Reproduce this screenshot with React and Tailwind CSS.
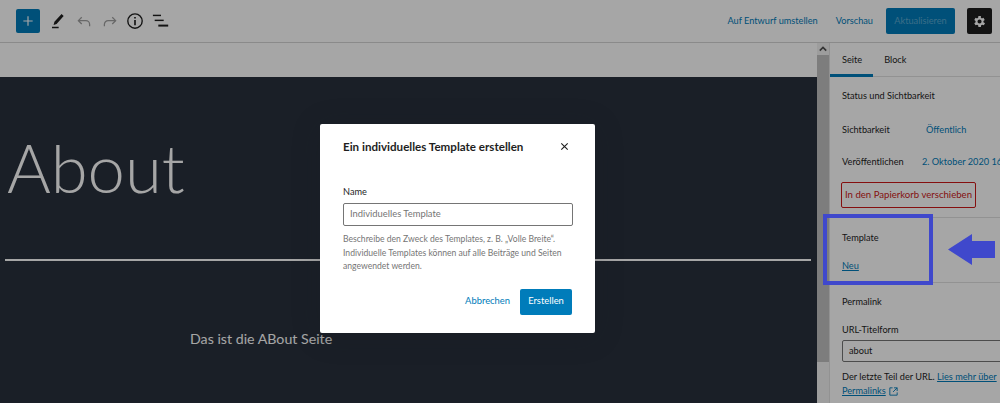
import React from "react";

const font = { fontFamily: '"Lato", "Open Sans", sans-serif' };

function Icon({ children, className = "" }) {
  return (
    <svg viewBox="0 0 24 24" className={className} fill="currentColor" aria-hidden="true">
      {children}
    </svg>
  );
}

function Header() {
  return (
    <header className="h-[43px] shrink-0 flex items-center bg-white border-b border-[#d4d4d4] pl-[16px] pr-[8px]">
      <div className="w-[24px] h-[24px] bg-[#007cba] rounded-[2px] flex items-center justify-center text-white">
        <Icon className="w-[14px] h-[14px]"><path d="M11 4h2v7h7v2h-7v7h-2v-7H4v-2h7z" /></Icon>
      </div>
      <div className="ml-[7px] w-[20px] h-[24px] flex items-center justify-center text-[#1e1e1e]">
        <Icon className="w-[20px] h-[20px]"><path d="M17.5 3.5 20 6l-8.5 9.500-3.600 1.200 1-3.700zM6 19h8v1.600H6z" /></Icon>
      </div>
      <div className="ml-[7px] w-[20px] flex items-center justify-center text-[#a0a0a0]">
        <svg viewBox="0 0 24 24" className="w-[18px] h-[18px]" fill="none" stroke="currentColor" strokeWidth="1.7"><path d="M9 7 4.500 11.500 9 16M5 11.500h9.500a5 5 0 0 1 5 5V19" /></svg>
      </div>
      <div className="ml-[6px] w-[20px] flex items-center justify-center text-[#a0a0a0]">
        <svg viewBox="0 0 24 24" className="w-[18px] h-[18px]" fill="none" stroke="currentColor" strokeWidth="1.7"><path d="M15 7l4.500 4.500L15 16M19 11.500H9.500a5 5 0 0 0-5 5V19" /></svg>
      </div>
      <div className="ml-[5px] w-[20px] flex items-center justify-center text-[#1e1e1e]">
        <svg viewBox="0 0 24 24" className="w-[18px] h-[18px]" fill="none" stroke="currentColor" strokeWidth="1.8"><circle cx="12" cy="12" r="9.600" /><path d="M12 10.500v7M12 6.500v2.200" strokeWidth="2.200" /></svg>
      </div>
      <div className="ml-[6px] w-[20px] flex items-center justify-center text-[#1e1e1e]">
        <svg viewBox="0 0 20 20" className="w-[18px] h-[18px]" fill="currentColor"><rect x="1" y="3" width="9" height="1.600" /><rect x="3" y="8.500" width="10" height="1.600" /><rect x="7" y="14" width="11" height="2.200" /></svg>
      </div>
      <div className="ml-auto flex items-center text-[9.2px] text-[#007cba]">
        <span>Auf Entwurf umstellen</span>
        <span className="ml-[18px]">Vorschau</span>
        <div className="ml-[13px] w-[69px] h-[26px] rounded-[2px] bg-[#007cba] text-[#5ea9d1] flex items-center justify-center">Aktualisieren</div>
        <div className="ml-[12px] w-[25px] h-[26px] rounded-[2px] bg-[#1e1e1e] text-white flex items-center justify-center">
          <Icon className="w-[15px] h-[15px]"><path d="M19.400 13a7.500 7.500 0 0 0 0-2l2.100-1.600-2-3.400-2.500 1a7.500 7.500 0 0 0-1.700-1L15.400 3.300h-4l-.4 2.700a7.500 7.500 0 0 0-1.700 1l-2.500-1-2 3.400L6.900 11a7.500 7.500 0 0 0 0 2l-2.100 1.600 2 3.400 2.500-1a7.500 7.500 0 0 0 1.700 1l.4 2.700h4l.4-2.700a7.500 7.500 0 0 0 1.700-1l2.500 1 2-3.400zM13.200 15.300a3.300 3.300 0 1 1 0-6.600 3.300 3.300 0 0 1 0 6.600z" transform="translate(-1.150 0)" /></Icon>
        </div>
      </div>
    </header>
  );
}

function Editor() {
  return (
    <main className="flex-1 min-w-0 flex flex-col bg-white">
      <div className="h-[34px] shrink-0" />
      <div className="flex-1 bg-[#28303d] text-white pl-[6px] overflow-hidden">
        <h1 className="text-[67px] leading-[80px] mt-[50px] ml-px font-light" style={{ fontFamily: '"Lato", sans-serif' }}>About</h1>
        <div className="h-[2px] bg-white mt-[52px] -ml-px mr-[6px]" />
        <p className="mt-[68px] ml-[184px] text-[14.2px] leading-[20px]">Das ist die ABout Seite</p>
      </div>
    </main>
  );
}

function Scrollbar() {
  return (
    <div className="w-[12px] shrink-0 bg-[#f1f1f1] flex flex-col">
      <div className="h-[12px] flex items-center justify-center text-[#505050]">
        <svg viewBox="0 0 10 10" className="w-[8px] h-[8px]" fill="none" stroke="currentColor" strokeWidth="2"><path d="M1 7l4-4 4 4" /></svg>
      </div>
      <div className="h-[307px] bg-[#c1c1c1]" />
    </div>
  );
}

function Row({ label, value, className = "", valueClass = "" }) {
  return (
    <div className={`flex h-[14px] items-center whitespace-nowrap ${className}`}>
      <span className="w-[80px] shrink-0 text-[#1e1e1e]">{label}</span>
      <span className={`text-[#007cba] ${valueClass}`}>{value}</span>
    </div>
  );
}

function Sidebar() {
  return (
    <aside className="w-[171px] shrink-0 bg-white border-l border-[#e0e0e0] text-[9.2px] text-[#1e1e1e] overflow-hidden whitespace-nowrap">
      <div className="h-[34px] flex border-b border-[#e0e0e0] pl-[12px]">
        <div className="relative flex items-center"><span>Seite</span><div className="absolute -left-[12px] -right-[11px] bottom-[-1px] h-[3px] bg-[#007cba]" /></div>
        <div className="ml-[22px] flex items-center">Block</div>
      </div>
      <section className="h-[141px] border-b border-[#e0e0e0] pl-[12px] pt-[12px]">
        <div className="h-[14px] flex items-center">Status und Sichtbarkeit</div>
        <Row className="mt-[20px]" label="Sichtbarkeit" value="Öffentlich" valueClass="ml-[4px]" />
        <Row className="mt-[18px]" label="Veröffentlichen" value="2. Oktober 2020 16:11" />
        <div className="mt-[13px] -ml-px w-[135px] h-[26px] border border-[#cc1818] rounded-[2px] text-[9.6px] text-[#cc1818] flex items-center justify-center">In den Papierkorb verschieben</div>
      </section>
      <section className="h-[65px] border-b border-[#e0e0e0] pl-[12px] pt-[13px]">
        <div className="h-[14px] flex items-center">Template</div>
        <div className="mt-[14px] h-[14px] flex items-center text-[#007cba] underline">Neu</div>
      </section>
      <section className="pl-[12px] pt-[12px]">
        <div className="h-[14px] flex items-center">Permalink</div>
        <div className="mt-[14px] h-[14px] flex items-center">URL-Titelform</div>
        <div className="mt-[3px] w-[170px] h-[22px] border border-[#757575] rounded-[2px] pl-[6px] flex items-center">about</div>
        <div className="mt-[8px] h-[14px] flex items-center">Der letzte Teil der URL.&nbsp;<span className="text-[#007cba] underline">Lies mehr über</span></div>
        <div className="h-[14px] flex items-center text-[#007cba]"><span className="underline">Permalinks</span>
          <svg viewBox="0 0 24 24" className="w-[11px] h-[11px] ml-[2px]" fill="none" stroke="currentColor" strokeWidth="2"><path d="M10 4H4v16h16v-6M13 4h7v7M20 4l-9 9" /></svg>
        </div>
      </section>
    </aside>
  );
}

function Modal() {
  return (
    <div className="absolute left-[320px] top-[124px] w-[275px] h-[209px] bg-white rounded-[2px] shadow-[0_3px_30px_rgba(25,30,35,0.2)] pl-[23px] pr-[22px]">
      <div className="h-[45px] flex items-center justify-between">
        <h2 className="text-[11.6px] font-bold text-[#1e1e1e]">Ein individuelles Template erstellen</h2>
        <svg viewBox="0 0 24 24" className="w-[11px] h-[11px] mr-[3px] text-[#1e1e1e]" fill="none" stroke="currentColor" strokeWidth="2.400"><path d="M5 5l14 14M19 5 5 19" /></svg>
      </div>
      <div className="mt-[16px] text-[9.2px] leading-[14px] text-[#1e1e1e]">Name</div>
      <div className="mt-[4px] h-[23px] border border-[#757575] rounded-[2px] pl-[6px] flex items-center text-[9.4px] text-[#757575]">Individuelles Template</div>
      <p className="mt-[7px] text-[8.6px] leading-[13.5px] text-[#757575] whitespace-nowrap">Beschreibe den Zweck des Templates, z. B. „Volle Breite“.<br />Individuelle Templates können auf alle Beiträge und Seiten<br />angewendet werden.</p>
      <div className="mt-[15px] mr-px flex items-center justify-end text-[9.4px]">
        <span className="text-[#007cba]">Abbrechen</span>
        <div className="ml-[10px] w-[52px] h-[26px] bg-[#007cba] rounded-[2px] text-white flex items-center justify-center">Erstellen</div>
      </div>
    </div>
  );
}

export default function App() {
  return (
    <div className="relative w-[1000px] h-[403px] overflow-hidden flex flex-col" style={font}>
      <Header />
      <div className="flex-1 min-h-0 flex">
        <Editor />
        <Scrollbar />
        <Sidebar />
      </div>
      <div className="absolute inset-0 bg-black/35" />
      <Modal />
      <div className="absolute left-[823px] top-[214px] w-[110px] h-[71px] border-[4px] border-[#3f48cc]" />
      <svg viewBox="0 0 47 31" className="absolute left-[948px] top-[234px] w-[47px] h-[31px]" fill="#3f48cc"><path d="M0 15.500 24 0v7h23v17H24v7z" /></svg>
    </div>
  );
}
